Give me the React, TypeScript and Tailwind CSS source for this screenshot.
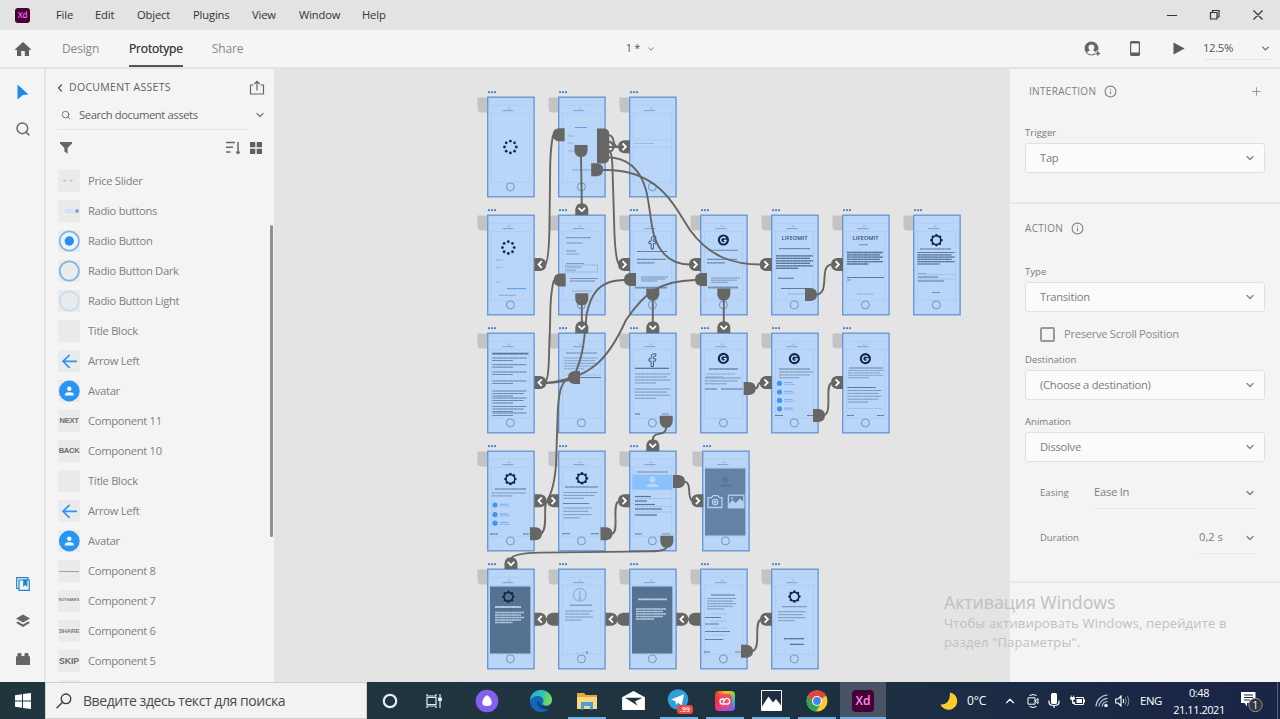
import React from "react";
import { ChevronDown, ChevronLeft, ChevronUp, Info, Plus, Search } from "lucide-react";

type P = { children?: React.ReactNode };
const INK = "#34506f";

/* ---------- artboard content primitives (local artboard units) ---------- */

function L({ x, y, w, o = 0.6, h = 1, c = INK }: { x: number; y: number; w: number; o?: number; h?: number; c?: string }) {
  return (
    <g stroke={c} strokeWidth={h}>
      <path d={`M${x} ${y}h${w}`} strokeOpacity={o * 0.55} />
      <path d={`M${x} ${y}h${w}`} strokeOpacity={o * 0.5} strokeDasharray="3.1 .6 1.7 .5 4.3 .5" />
    </g>
  );
}
function Para({ x, y, w, n, o = 0.55, gap = 2.9, c = INK, h = 0.9 }: { x: number; y: number; w: number; n: number; o?: number; gap?: number; c?: string; h?: number }) {
  return (
    <g>
      {Array.from({ length: n }, (_, i) => (
        <L key={i} x={x} y={y + i * gap} w={i === n - 1 ? w * 0.6 : w - (i % 2) * 3} o={o} c={c} h={h} />
      ))}
    </g>
  );
}
function Dots({ x, y }: { x: number; y: number }) {
  return (
    <g fill="#10294d">
      {Array.from({ length: 8 }, (_, i) => (
        <circle key={i} cx={x + 5.9 * Math.cos((i * Math.PI) / 4)} cy={y + 5.9 * Math.sin((i * Math.PI) / 4)} r={1.4} />
      ))}
    </g>
  );
}
function Gear({ x, y }: { x: number; y: number }) {
  return (
    <g fill="#10294d">
      <circle cx={x} cy={y} r={4.4} fill="none" stroke="#10294d" strokeWidth={1.5} />
      {Array.from({ length: 8 }, (_, i) => (
        <circle key={i} cx={x + 4.9 * Math.cos((i * Math.PI) / 4)} cy={y + 4.9 * Math.sin((i * Math.PI) / 4)} r={1.35} />
      ))}
    </g>
  );
}
function GLogo({ x, y }: { x: number; y: number }) {
  return (
    <g>
      <circle cx={x} cy={y} r={5.6} fill="#10294d" />
      <path d={`M${x + 2.2} ${y - 1.7}a2.8 2.8 0 1 0 .6 2h-2.6`} fill="none" stroke="#cfe2fb" strokeWidth={1.3} />
    </g>
  );
}
function FLogo({ x, y }: { x: number; y: number }) {
  return (
    <path
      d={`M${x + 3.4} ${y - 6.2}h-1.9q-2.8 0-2.8 3.2v1.8h-2.2v2.3h2.2v5.4h2.3v-5.4h2.1l.3-2.3h-2.4v-1.6q0-1 1-1h1.4z`}
      fill="none"
      stroke={INK}
      strokeWidth={0.9}
    />
  );
}
function Checks({ x, ys }: { x: number; ys: number[] }) {
  return (
    <g>
      {ys.map((y) => (
        <g key={y}>
          <circle cx={x} cy={y} r={2.6} fill="#3d97f3" />
          <L x={x + 5} y={y - 0.7} w={8} c="#4a95ea" o={0.8} />
          <L x={x + 5} y={y + 1.2} w={10} c="#4a95ea" o={0.45} />
        </g>
      ))}
    </g>
  );
}
function Title({ x, y, children }: { x: number; y: number } & P) {
  return (
    <text x={x} y={y} fontSize={5.8} fontWeight={600} textAnchor="middle" fill={INK} fontFamily="Open Sans, sans-serif" textLength={26} lengthAdjust="spacingAndGlyphs">
      {children}
    </text>
  );
}
function Dark({ c = "#567291" }: { c?: string }) {
  return <rect x={3} y={17.5} width={40.4} height={67} fill={c} />;
}

type Board = { x: number; y: number; body: React.ReactNode };

const C = [487.5, 558.5, 629.5, 700.5, 771.3, 842.2, 913.3];
const R = [96.6, 214.6, 332.7, 450.7, 568.8];

const boards: Board[] = [
  { x: C[0], y: R[0], body: <Dots x={23.4} y={50} /> },
  {
    x: C[1], y: R[0],
    body: (
      <g>
        <L x={17} y={30.5} w={12} c="#3f86dd" o={0.9} />
        <L x={10} y={39} w={6} o={0.25} /><L x={10} y={46} w={6} o={0.25} /><L x={10} y={54} w={6} o={0.25} />
        <L x={14} y={73} w={22} c="#3f86dd" />
      </g>
    ),
  },
  { x: C[2], y: R[0], body: <g><L x={5} y={46.5} w={20} c="#6ea6e8" o={0.6} /><path d="M4 43h38M4 50h38" stroke="#9dc3f0" strokeWidth={0.5} /></g> },
  {
    x: C[0], y: R[1],
    body: (
      <g>
        <Dots x={21.3} y={32.6} />
        <L x={9} y={45} w={7} o={0.25} /><L x={9} y={52.5} w={7} o={0.25} /><L x={9} y={67} w={5} o={0.25} />
        <L x={20} y={73.6} w={19} c="#3584e4" o={0.9} /><L x={12} y={80.3} w={17} o={0.35} />
      </g>
    ),
  },
  {
    x: C[1], y: R[1],
    body: (
      <g>
        <L x={8} y={22.7} w={25} o={0.6} /><L x={8} y={28} w={17} o={0.5} /><L x={8} y={36} w={10} o={0.5} /><L x={8} y={39} w={13} o={0.4} />
        <L x={8} y={48.5} w={18} o={0.5} /><rect x={7.5} y={50} width={32} height={7} fill="none" stroke="#7e9fca" strokeWidth={0.5} />
        <L x={8.5} y={52} w={15} o={0.5} /><L x={8.5} y={55} w={9} o={0.5} /><L x={12} y={63.5} w={28} /><L x={12} y={66} w={25} /><L x={14} y={76} w={20} o={0.3} />
      </g>
    ),
  },
  { x: C[2], y: R[1], body: <g><FLogo x={23.4} y={27.5} /><L x={8} y={36.5} w={30} o={0.8} /><Para x={8} y={44.3} w={29} n={2} gap={3.6} o={0.9} /><Para x={12} y={62} w={27} n={3} gap={2} o={0.6} /><L x={6} y={72.6} w={32} h={1.7} /></g> },
  { x: C[3], y: R[1], body: <g><GLogo x={23.4} y={25} /><L x={10} y={35.3} w={28} o={0.7} /><Para x={7} y={44.3} w={30} n={2} gap={3.6} o={0.9} /><Para x={11} y={63} w={29} n={3} gap={2.2} /><L x={8} y={72.5} w={30} h={1.8} /></g> },
  { x: C[4], y: R[1], body: <g><Title x={23.5} y={25.4}>LIFEOMIT</Title><L x={8} y={33.6} w={31} o={0.75} /><Para x={5} y={40.8} w={37} n={6} gap={2.5} o={0.95} h={1.3} /><L x={7} y={63.3} w={16} o={0.9} /><L x={10} y={73.5} w={25} o={0.85} /><L x={17} y={79} w={17} o={0.25} /></g> },
  { x: C[5], y: R[1], body: <g><Title x={23.5} y={25.4}>LIFEOMIT</Title><L x={17} y={29.7} w={9} /><Para x={5} y={37.5} w={36} n={6} gap={2.3} o={0.95} h={1.3} /><L x={5} y={62.5} w={37} o={0.9} /><L x={5} y={65} w={4} /><L x={15} y={79} w={17} o={0.25} /></g> },
  { x: C[6], y: R[1], body: <g><Gear x={23.4} y={25.2} /><L x={7} y={34} w={31} o={0.8} /><Para x={4.5} y={37.5} w={37} n={6} gap={2.3} o={0.9} h={1.2} /><L x={5} y={58.5} w={8} o={0.35} /><L x={5} y={62} w={20} o={0.8} /><L x={5} y={66} w={26} o={0.8} /><path d="M4.500 59.500h38M4.500 64h38" stroke="#86aede" strokeWidth={0.5} /><L x={19} y={77.5} w={8} /></g> },
  {
    x: C[0], y: R[2],
    body: (
      <g>
        <L x={5.5} y={20.6} w={36} o={0.9} h={1.9} />
        {[25, 31.7, 39, 48, 58, 65, 73.5, 80].map((y, i) => <Para key={y} x={5.5} y={y} w={34} n={i > 3 && i < 7 ? 3 : 2} gap={2.5} o={0.7} h={1} />)}
      </g>
    ),
  },
  { x: C[1], y: R[2], body: <g><L x={8} y={20} w={31} /><Para x={6} y={25} w={34} n={5} gap={2.7} o={0.45} /><L x={21} y={44.5} w={22} o={0.9} /><path d="M6 42h37" stroke="#86aede" strokeWidth={0.5} /></g> },
  { x: C[2], y: R[2], body: <g><FLogo x={23.4} y={27} /><L x={6} y={35.3} w={34} o={0.9} h={1.2} /><Para x={6} y={41} w={35} n={4} gap={3} /><Para x={6} y={56} w={35} n={4} gap={3.1} /><L x={6} y={81} w={5} o={0.9} /><L x={33} y={81} w={7} /></g> },
  { x: C[3], y: R[2], body: <g><GLogo x={23.4} y={25.4} /><L x={9} y={36} w={29} o={0.9} h={1.2} /><Para x={6} y={41} w={29} n={2} o={0.4} /><Para x={5} y={45} w={36} n={3} /><L x={5} y={56} w={12} o={0.8} /><L x={21} y={56} w={22} o={0.8} /></g> },
  { x: C[4], y: R[2], body: <g><GLogo x={23.4} y={25.6} /><L x={8} y={36} w={31} o={0.7} /><Para x={8} y={39} w={34} n={3} /><Checks x={8.5} ys={[50.3, 59, 67.4, 75.8]} /><L x={4} y={82.5} w={8} o={0.8} /><L x={36} y={82.5} w={6} o={0.8} /></g> },
  { x: C[5], y: R[2], body: <g><GLogo x={23.4} y={25.6} /><L x={7} y={35} w={34} o={0.7} /><Para x={6} y={37.5} w={35} n={4} gap={2.4} o={0.45} /><L x={5.5} y={54.5} w={28} o={0.9} /><Para x={5.5} y={57.5} w={34} n={5} /><path d="M6 75.5h34" stroke="#86aede" strokeWidth={0.5} /><L x={5} y={82.5} w={7} o={0.8} /><L x={35} y={82.5} w={7} o={0.8} /></g> },
  { x: C[0], y: R[3], body: <g><Gear x={23.4} y={28} /><L x={8} y={38} w={31} o={0.8} /><Para x={5} y={42} w={34} n={2} /><Checks x={8} ys={[54, 63.6, 72.2]} /><L x={3} y={83} w={8} o={0.8} /><L x={36} y={83} w={6} o={0.8} /></g> },
  { x: C[1], y: R[3], body: <g><Gear x={24} y={27.3} /><L x={7} y={36} w={33} o={0.8} /><Para x={5.5} y={41.5} w={34} n={3} /><L x={5} y={52.5} w={26} o={0.8} /><Para x={5.5} y={57} w={28} n={4} gap={3.3} /><L x={4} y={82.7} w={8} o={0.8} /><L x={33} y={82.7} w={8} o={0.8} /></g> },
  {
    x: C[2], y: R[3],
    body: (
      <g>
        <L x={8} y={21} w={31} o={0.6} />
        <rect x={3.2} y={23.5} width={40.5} height={15.3} fill="#8bc1fa" />
        <g fill="#b7d7fb"><circle cx={23.4} cy={28.5} r={3} /><path d="M17.5 36v-1q0-2.3 6-2.3t6 2.3v1z" /></g>
        {[45.5, 50, 53.5, 58, 64].map((y, i) => <L key={y} x={6} y={y} w={[16, 12, 20, 27, 22][i]} o={0.95} h={1.2} />)}
        <path d="M6 47.5h36M6 55.5h36M6 61h36" stroke="#86aede" strokeWidth={0.5} />
        <L x={6} y={83} w={7} o={0.8} /><L x={33} y={83} w={8} />
      </g>
    ),
  },
  {
    x: 702.5, y: R[3],
    body: (
      <g>
        <Dark c="#6582a5" />
        <g fill="#5a779b"><circle cx={23.4} cy={28.5} r={3} /><path d="M17.5 36v-1q0-2.3 6-2.3t6 2.3v1z" /></g>
        <g fill="none" stroke="#b4d1f3" strokeWidth={1.3}>
          <path d="M6 46.7h3.6l1.5-2h4.8l1.5 2H20v9.8H6z" /><circle cx={13.2} cy={51} r={2.7} /><circle cx={13.2} cy={51} r={0.6} />
          <rect x={26.4} y={44.2} width={15.4} height={12.6} />
        </g>
        <path d="M26.4 57v-3.500l4.2-4.5 3 3 4.500-4.500 3.700 4V57z" fill="#b4d1f3" /><circle cx={30} cy={47.3} r={1} fill="#b4d1f3" />
      </g>
    ),
  },
  { x: C[0], y: R[4], body: <g><Dark /><g transform="translate(-2 0)"><Gear x={23.4} y={27.8} /></g><L x={8} y={38} w={26} c="#cfe2fa" o={1} h={2} /><Para x={8} y={43.5} w={29} n={5} gap={2.5} c="#cfe2fa" o={0.95} h={1.4} /></g> },
  { x: C[1], y: R[4], body: <g><circle cx={21.8} cy={25.8} r={6.3} fill="none" stroke="#7da3d3" /><path d="M21.8 21.5v8M20 30h3.5" stroke="#7da3d3" /><L x={12} y={36.2} w={22} o={0.7} /><Para x={7} y={42} w={28} n={4} gap={3} /><path d="M18 84h2M24 84h1.5" stroke="#9ab9e2" /><circle cx={29} cy={83.5} r={1.2} fill="#5b99e8" /></g> },
  { x: C[2], y: R[4], body: <g><Dark /><L x={9} y={30.3} w={29} c="#cfe2fa" o={1} h={1.7} /><Para x={7} y={40} w={30} n={5} gap={2.5} c="#cfe2fa" o={0.95} h={1.4} /></g> },
  { x: C[3], y: R[4], body: <g><L x={11} y={26} w={24} o={0.8} /><Para x={7} y={29.5} w={29} n={5} gap={2.6} /><L x={5} y={48.5} w={16} o={0.85} /><L x={5} y={55} w={14} o={0.75} /><L x={5} y={62.5} w={25} o={0.85} /><L x={5} y={70.5} w={18} o={0.8} /><path d="M11 45h16M11 52h16M11 59h16M11 66h16" stroke="#8badd8" strokeWidth={0.5} /><L x={4} y={83} w={6} o={0.8} /><L x={35} y={83} w={6} /></g> },
  { x: C[4], y: R[4], body: <g><Gear x={23.4} y={27.6} /><L x={11} y={37.7} w={25} o={0.6} /><Para x={7} y={42.7} w={28} n={4} gap={3} /><L x={13} y={69.7} w={20} o={0.95} h={1.2} /><L x={19} y={75.4} w={14} o={0.95} h={1.2} /></g> },
];

function Artboard({ x, y, body }: Board) {
  return (
    <div className="absolute" style={{ left: x - 284.4, top: y - 77 }}>
      <svg width={60} height={110} viewBox="-10 -8 60 110" className="block overflow-visible">
        <path d="M-9.5 0.4h10v15h-6q-4 0-4-4z" fill="#c3c3c3" />
        <g fill="#4a81cf"><circle cx={2} cy={-4.8} r={1.1} /><circle cx={5} cy={-4.8} r={1.1} /><circle cx={8} cy={-4.8} r={1.1} /></g>
        <rect x={0.7} y={0.2} width={46.4} height={99.6} fill="#b9d6f9" stroke="#6998d8" strokeWidth={1.4} />
        <path d="M1 8.3h46M1 16.3h46M1 85.3h46M4.5 17v68M42.5 17v68" stroke="#a7c8f0" strokeWidth={0.6} />
        <path d="M20.5 11.2h3" stroke="#89a7cf" strokeWidth={0.8} />
        <L x={15.5} y={13.6} w={11} o={0.45} />
        <circle cx={23.4} cy={89.9} r={4} fill="none" stroke="#7394be" strokeWidth={1} />
        {body}
      </svg>
    </div>
  );
}

/* ---------- prototype wires ---------- */

const rot: Record<string, number> = { R: 0, D: 90, L: 180, U: 270 };
const sources: [number, number, string][] = [
  [558.6, 134.8, "L"], [581, 151, "D"], [597.2, 169.8, "R"], [559.7, 280, "L"], [630, 279.6, "L"], [701, 279.6, "L"],
  [581.8, 299.3, "D"], [652.8, 294.5, "D"], [723.8, 294.5, "D"], [811, 294.6, "R"], [574, 377.6, "L"], [749.7, 388.6, "R"],
  [819, 415.4, "R"], [666.2, 421.7, "D"], [536, 533.8, "R"], [606.5, 533.8, "R"], [666.8, 541.7, "D"], [679, 481.6, "R"],
  [552.6, 619.3, "L"], [623, 619.3, "L"], [694.6, 619.3, "L"], [747, 651.3, "R"],
];
// [x, y, rounded side, chevron direction]
const targets: [number, number, string, string][] = [
  [624, 146.8, "L", "R"], [581.8, 209.2, "U", "D"], [540.4, 264.5, "R", "L"], [624, 264.5, "L", "R"], [695, 264.5, "L", "R"],
  [765.8, 264.5, "L", "R"], [837, 264.5, "L", "R"], [581.8, 327.2, "U", "D"], [652.8, 327.2, "U", "D"], [723.8, 327.2, "U", "D"],
  [540.4, 382.6, "R", "L"], [765.8, 382.6, "L", "R"], [837, 382.6, "L", "R"], [652.8, 445.2, "U", "D"], [540.4, 500.8, "R", "L"],
  [553, 500.8, "L", "R"], [624, 500.8, "L", "R"], [697.3, 500.8, "L", "R"], [511, 563.3, "U", "D"], [540.4, 619.3, "R", "L"],
  [611.5, 619.3, "R", "L"], [682.3, 619.3, "R", "L"], [766, 619.3, "L", "R"],
];
const wires = [
  "M553 135Q550.6 148 550.2 165L549.5 225Q549 262 545 264.5",
  "M581 156L581.8 204",
  "M608 135Q612.5 135 613.5 141T619 147M608 141.5Q613 142 613.5 147M608 147h12M608 152Q613 152 613.5 147",
  "M608 150Q612 151 612.4 165L614.2 225Q615 259 619 264.5",
  "M608 157.3C630 158 641 172 646 190C652 215 650 235 661 250C668 260 678 264.5 690 264.5",
  "M602 170C660 168 675 208 690 230C710 258 735 264.5 761 264.5",
  "M554 280Q550.3 292 550.2 320L549 355Q548.6 380 545 382.6",
  "M625 280C596 280 590 298 586.5 315C584.5 340 583 357 574 376",
  "M695 280C660 281 645 292 626 320C608 360 590 379 545 383",
  "M570 377C560 382 558 395 557.5 420L556 465Q554 490 547 500.8",
  "M569 380C560 382 553 383 545 383",
  "M541 534C549 528 542 504 547.5 500.8",
  "M581.8 304v18M652.8 300v22M723.8 300v22",
  "M816 294.6C831 294 818 265 832 264.5",
  "M755 388.6C760 388 756 383 761 382.6",
  "M824 415.4C833 412 824 385 832 382.6",
  "M666.2 427C666 438 653 430 652.8 440",
  "M612 533.8C620 532 611 504 619 500.8",
  "M684 481.6C693 482 686 498 692.5 500.8",
  "M666.8 547Q666 551 650 551.4L540 552.6Q513 553 511 559",
  "M752 651.3C762 649 753 622 761 619.3",
  "M546 619.300h12M617 619.300h12M688 619.300h12",
];

function Wires() {
  return (
    <svg width={736} height={613} viewBox="274 69 736 613" className="absolute left-0 top-0">
      <g fill="none" stroke="#666664" strokeWidth={1.9}>{wires.map((d) => <path key={d} d={d} />)}</g>
      <path d="M597 128.5h6.5q5.7 0 5.7 5.5v24q0 5.4-5.7 5.4H597z" fill="#666664" />
      {sources.map(([x, y, r], i) => (
        <path key={i} transform={`translate(${x} ${y}) rotate(${rot[r]})`} d="M-6-6.5h6q6 .8 6 6.5t-6 6.5h-6z" fill="#666664" />
      ))}
      {targets.map(([x, y, r, c], i) => (
        <g key={i} transform={`translate(${x} ${y})`}>
          <path transform={`rotate(${rot[r]})`} d="M-6-6.5h6q6 .8 6 6.5t-6 6.5h-6z" fill="#666664" />
          <path transform={`rotate(${rot[c]})`} d="M-1.4-3.3L1.9 0-1.4 3.3" fill="none" stroke="#fff" strokeWidth={1.8} />
        </g>
      ))}
    </svg>
  );
}

/* ---------- left panel ---------- */

const ArrowThumb = () => (
  <svg viewBox="0 0 22 22" className="size-[22px]" fill="none" stroke="#2f94f3" strokeWidth="1.7"><path d="M19 11.3H5M11.7 4.8L5 11.3l6.7 6.5" /></svg>
);
const AvatarThumb = () => (
  <svg viewBox="0 0 22 22" className="size-[22px]"><circle cx="11.3" cy="11" r="10.4" fill="#2695f3" /><circle cx="11.3" cy="8.8" r="2.2" fill="#fff" /><path d="M6.9 15.4v-1q0-2.2 4.4-2.2t4.4 2.2v1z" fill="#fff" /></svg>
);
const Ring = ({ c, dot }: { c: string; dot?: boolean }) => (
  <svg viewBox="0 0 22 22" className="size-[22px]"><circle cx="11.3" cy="11" r="9.6" fill={dot ? "#eef4fb" : "none"} stroke={c} strokeWidth="1.8" />{dot && <circle cx="11.3" cy="11" r="4.7" fill="#2490f2" />}</svg>
);
const Word = ({ children }: P) => <span className="font-['Liberation_Sans'] text-[7.600px] font-bold text-[#6d6d6d] tracking-[-0.300px]">{children}</span>;

const assets: [string, React.ReactNode][] = [
  ["Price Slider", <svg key="a" viewBox="0 0 22 22" className="size-[22px]" fill="#a5bfdc"><path d="M4 10.8h5M11.500 10.800h5" stroke="#cddceb" /><circle cx="6.500" cy="10.800" r="1" /><circle cx="13" cy="10.800" r="1" /></svg>],
  ["Radio buttons", <svg key="b" viewBox="0 0 22 22" className="size-[22px]"><path d="M7 11h8" stroke="#cfe0f4" strokeWidth="4" /><circle cx="19" cy="11" r="2" fill="#79a9df" /></svg>],
  ["Radio Button", <Ring key="c" c="#7fb2ea" dot />],
  ["Radio Button Dark", <Ring key="d" c="#7fb2ea" />],
  ["Radio Button Light", <Ring key="e" c="#c7ddf3" />],
  ["Title Block", null],
  ["Arrow Left", <ArrowThumb key="g" />],
  ["Avatar", <AvatarThumb key="h" />],
  ["Component 11", <Word key="i">NEXT</Word>],
  ["Component 10", <Word key="j">BACK</Word>],
  ["Title Block", null],
  ["Arrow Left", <ArrowThumb key="l" />],
  ["Avatar", <AvatarThumb key="m" />],
  ["Component 8", <div key="n" className="h-px w-5 bg-[#a0a0a0]" />],
  ["Component 7", <span key="o" className="font-['Liberation_Sans'] text-[3.600px] font-bold text-[#777]">NOTHANKS</span>],
  ["Component 6", <span key="p" className="font-['Liberation_Sans'] text-[6.200px] font-bold text-[#808080] tracking-[-0.200px]">SHARE</span>],
  ["Component 5", <span key="q" className="font-['Liberation_Sans'] text-[8.600px] font-bold text-[#6d6d6d]">SKIP</span>],
];

function AssetsPanel() {
  return (
    <div className="relative flex w-[228px] shrink-0 flex-col overflow-hidden bg-[#f4f4f4]">
      <div className="flex h-[38px] shrink-0 items-center pl-2 pr-[9px]">
        <ChevronLeft size={12} strokeWidth={2.600} color="#555" />
        <span className="ml-[3px] text-[10.500px] tracking-[0.300px] text-[#5f5f5f]">DOCUMENT ASSETS</span>
        <svg viewBox="0 0 16 16" className="ml-auto size-4" fill="none" stroke="#666" strokeWidth="1.200"><path d="M4.500 5H1.500v9h13V5h-3M8 10.500V1.500M5.300 4L8 1.300 10.700 4" /></svg>
      </div>
      <div className="ml-[11px] flex h-[22px] w-[208px] shrink-0 items-start">
        <Search size={10} strokeWidth={2.400} color="#777" className="ml-1 mt-[3px]" />
        <span className="ml-[8px] text-[11.200px] leading-[16px] tracking-[-0.380px] text-[#5f5f5f]">Search document assets</span>
        <ChevronDown size={12} strokeWidth={2.600} color="#777" className="ml-auto mr-[-1px] mt-[2px]" />
      </div>
      <div className="ml-[11px] h-px w-[191px] shrink-0 bg-[#e4e4e4]" />
      <div className="flex h-[36px] shrink-0 items-center pl-[14px] pr-[12px]">
        <svg viewBox="0 0 12 12" className="size-3" fill="#666"><path d="M0 0h12v1.500L7.600 6v5.800L4.400 9.500V6L0 1.500z" /></svg>
        <svg viewBox="0 0 14 14" className="ml-auto h-[14px] w-[14px]" fill="none" stroke="#666" strokeWidth="1.500"><path d="M0 1.500h9M0 6.300h7M0 11h4.500M12 1v11.500M10.300 10.700L12 12.500l1.700-1.800" /></svg>
        <svg viewBox="0 0 12 12" className="ml-[10px] size-3" fill="#5f5f5f"><path d="M0 0h5.300v5.300H0zM6.700 0H12v5.300H6.700zM0 6.700h5.300V12H0zM6.700 6.700H12V12H6.700z" /></svg>
      </div>
      <div className="flex shrink-0 flex-col pl-3">
        {assets.map(([name, thumb], i) => (
          <div key={i} className="flex h-[30px] items-center">
            <div className="flex size-[22px] items-center justify-center overflow-hidden bg-[#ebebeb]">{thumb}</div>
            <span className="ml-2 text-[11.200px] tracking-[-0.300px] text-[#808080]">{name}</span>
          </div>
        ))}
        <div className="mt-1 h-[22px] w-[22px] bg-[#ebebeb]" />
      </div>
      <div className="absolute right-[1px] top-[156px] h-[312px] w-[3px] rounded-full bg-[#909090]" />
    </div>
  );
}

function Rail() {
  return (
    <div className="flex w-[46px] shrink-0 flex-col items-center border-r-2 border-[#e6e6e6] bg-[#f4f4f4] pb-[17px] pl-[1px] pt-[15px]">
      <svg viewBox="0 0 12 16" className="h-4 w-3" fill="#1c8ce8"><path d="M0.500 0.500L11.500 10.500 6 11 0.500 15.500z" /></svg>
      <Search size={16} strokeWidth={2.200} color="#666" className="mt-[21px]" />
      <svg viewBox="0 0 14 14" className="mt-auto size-[14px]" fill="none" stroke="#1b86cf" strokeWidth="1.200"><path d="M3 3h10.300v10.300H3zM3 11.500H.7V.7H12V3" /><path d="M7.800 3h3v5.500L9.300 7 7.800 8.500z" fill="#1b86cf" /></svg>
      <svg viewBox="0 0 14 14" className="mt-[23px] size-[14px]" fill="#666"><path d="M7 .5L14 4.500 7 8.500 0 4.500zM0 8.800l2-1.200 5 2.900 5-2.900 2 1.200-7 4.200z" /></svg>
      <svg viewBox="0 0 14 12" className="mt-[25px] h-3 w-[14px]" fill="#666"><path d="M1.500 3V1q0-1 1-1h2q1 0 1 1v2h3V1q0-1 1-1h2q1 0 1 1v2q1.500 0 1.500 1.200V12H0V4.200Q0 3 1.500 3z" /></svg>
    </div>
  );
}

/* ---------- right panel ---------- */

const Label = ({ children }: P) => <div className="flex h-[20px] items-center text-[9.600px] tracking-[-0.020px] text-[#7a7a7a]">{children}</div>;
const Select = ({ children }: P) => (
  <div className="flex h-[30px] w-[240px] items-center justify-between rounded-[3px] border border-[#e0e0e0] bg-[#fbfbfb] pl-[14px] pr-[8px] text-[11.200px] tracking-[-0.260px] text-[#7d7d7d]">
    <span>{children}</span>
    <ChevronDown size={12} strokeWidth={2.600} color="#858585" />
  </div>
);
const Heading = ({ children }: P) => (
  <div className="flex items-center gap-[8px] text-[10px] tracking-[0.320px] text-[#808080]">{children}<Info size={13} strokeWidth={2} color="#808080" /></div>
);

function Inspector() {
  return (
    <div className="flex w-[270px] shrink-0 flex-col bg-[#f4f4f4]">
      <div className="flex h-[45px] items-center justify-between pl-[19px] pr-[17px]"><Heading>INTERACTION</Heading><Plus size={13} strokeWidth={1.800} color="#999" /></div>
      <div className="mt-[9px] pl-[15px]"><Label>Trigger</Label><Select>Tap</Select></div>
      <div className="mt-[29px] h-[2px] bg-[#e8e8e8]" />
      <div className="flex h-[49px] items-center pl-[15px]"><Heading>ACTION</Heading></div>
      <div className="mt-[9px] pl-[15px]">
        <Label>Type</Label>
        <Select>Transition</Select>
        <div className="flex h-[38px] items-center pl-[15px] pt-[7px]">
          <div className="size-[15px] rounded-[2px] border-2 border-[#999]" />
          <span className="ml-[9px] text-[11.200px] tracking-[-0.300px] text-[#8a8a8a]">Preserve Scroll Position</span>
        </div>
        <Label>Destination</Label>
        <Select>(Choose a destination)</Select>
        <div className="h-[12px]" />
        <Label>Animation</Label>
        <Select>Dissolve</Select>
      </div>
      <div className="ml-[30px] mt-[15px] flex h-[32px] w-[216px] items-center text-[#7d7d7d]">
        <span className="w-[54px] text-[9.600px]">Easing</span>
        <div className="flex h-full grow items-center justify-between border-b border-[#e9e9e9] text-[11.200px] tracking-[-0.260px]">Ease In<ChevronDown size={12} strokeWidth={2.600} /></div>
      </div>
      <div className="ml-[30px] mt-[13px] flex h-[32px] w-[216px] items-center justify-between text-[#7d7d7d]">
        <span className="text-[9.600px] tracking-[-0.100px]">Duration</span>
        <div className="flex h-full w-[57px] items-center justify-between border-b border-[#e9e9e9] text-[11.200px]">0,2 s<ChevronDown size={12} strokeWidth={2.600} /></div>
      </div>
      <div className="mt-[27px] h-[2px] bg-[#e8e8e8]" />
    </div>
  );
}

/* ---------- top bars ---------- */

function TopBars() {
  return (
    <>
      <div className="flex h-[30px] shrink-0 items-center bg-[#e3e3e3] pl-[15px] text-[11.200px] tracking-[-0.150px] text-[#333]">
        <div className="mr-[26px] flex size-[15px] items-center justify-center rounded-[3px] bg-[#470137] text-[8px] font-semibold text-[#f76be6]">Xd</div>
        <span className="w-[39px]">File</span><span className="w-[42px]">Edit</span><span className="w-[56px]">Object</span><span className="w-[59px]">Plugins</span><span className="w-[47px]">View</span><span className="w-[63px]">Window</span><span>Help</span>
        <svg viewBox="0 0 100 14" className="ml-auto mr-[14px] h-[14px] w-[100px]" fill="none" stroke="#333" strokeWidth="1.200"><path d="M1 7.500h10M44.500 4.500h6.500v6.500h-6.500zM46.500 4.300V2.500h6.500v6.500h-1.700M87.500 2.500l9 9M96.500 2.500l-9 9" /></svg>
      </div>
      <div className="flex h-[39px] shrink-0 items-center border-b-2 border-[#e3e3e3] bg-[#f5f5f5] pl-[15px] text-[12px] text-[#8a8a8a]">
        <svg viewBox="0 0 16 14" className="h-[14px] w-4" fill="#5f5f5f"><path d="M8 0l8 7.300-1 1.100-1-.9V14H9.800V9H6.200v5H2V7.500l-1 .9-1-1.100z" /></svg>
        <span className="ml-[31px] w-[67px] tracking-[-0.150px]">Design</span>
        <div className="relative mr-[29px] flex h-[39px] items-center tracking-[-0.150px] text-[#444] [text-shadow:0_0_0.400px_#444]">Prototype<div className="absolute inset-x-0 bottom-[1px] h-[2px] bg-[#555]" /></div>
        <span className="tracking-[-0.150px]">Share</span>
        <div className="ml-auto flex items-center">
          <div className="mr-[428px] flex items-center gap-[6px] text-[11px] tracking-[-0.300px] text-[#555]"><span>1 *</span><ChevronDown size={10} strokeWidth={2.500} color="#999" /></div>
          <svg viewBox="0 0 17 16" className="h-4 w-[17px]" fill="none" stroke="#666" strokeWidth="1.300"><circle cx="7.500" cy="7.500" r="6.300" /><path d="M3 12c0-1.500 3-1.500 3-3-2-2-1.500-5.500 1.500-5.500S11 7 9 9c0 1.500 2 1.300 3 2.500l-4.500 2.300z" fill="#f5f5f5" stroke="none" /><path d="M2 3.500Q4 1 7.500 1.200T13.500 6q.5 3-1.500 5.300-1-1-3-1.800c2-2 2-6-1.500-6S3.500 7.500 6 9.500q-2 .5-3 2Q-.5 8 2 3.500z" fill="#666" stroke="none" /><path d="M14 9.500v6M11 12.500h6" stroke="#f5f5f5" strokeWidth="3" /><path d="M13.800 10.300v4.400M11.600 12.500H16" /></svg>
          <svg viewBox="0 0 10 15" className="ml-[29px] h-[15px] w-[10px]"><rect x=".6" y=".6" width="8.800" height="13.800" rx="1" fill="none" stroke="#5f5f5f" strokeWidth="1.200" /><path d="M0 1h10v1.500H0zM0 11.500h10V14H0z" fill="#5f5f5f" /></svg>
          <svg viewBox="0 0 12 13" className="ml-[33px] h-[13px] w-3" fill="#5a5a5a"><path d="M.5.5L11.700 6.500.5 12.500z" /></svg>
          <div className="ml-[18px] mr-[9px] flex h-[22px] w-[68px] items-center justify-between border-b border-[#e7e7e7] text-[11.400px] text-[#555]"><span className="tracking-[-0.400px]">12.5%</span><ChevronDown size={11} strokeWidth={2.600} color="#666" /></div>
        </div>
      </div>
    </>
  );
}

/* ---------- taskbar ---------- */

const Slot = ({ children, on, active }: P & { on?: boolean; active?: boolean }) => (
  <div className={active ? "relative flex h-full w-[46px] items-center justify-center bg-[#485465]" : "relative flex h-full w-[46px] items-center justify-center"}>
    {children}
    {on && <div className={active ? "absolute inset-x-0 bottom-0 h-[2px] bg-[#76b0e3]" : "absolute inset-x-[4px] bottom-0 h-[2px] bg-[#76b0e3]"} />}
  </div>
);

function Taskbar() {
  return (
    <div className="flex h-[37px] shrink-0 items-stretch bg-linear-to-r from-[#20363f] via-[#1f3440] to-[#1a2446] text-white">
      <div className="flex w-[45px] items-center justify-center">
        <svg viewBox="0 0 16 16" className="size-4" fill="#fff"><path d="M0 2.200l7-1v6.400H0zM8 1l8-1v7.600H8zM0 8.500h7v6.300l-7-1zM8 8.500h8V16l-8-1.100z" /></svg>
      </div>
      <div className="flex w-[322px] items-center border border-[#cfcfcf] bg-[#f2f2f2] pl-[10px]">
        <svg viewBox="0 0 16 16" className="size-4" fill="none" stroke="#3a3a3a" strokeWidth="1.300"><circle cx="10" cy="5.800" r="4.800" /><path d="M6.500 9.300L.6 15.200" /></svg>
        <span className="ml-[11px] text-[14px] tracking-[-0.430px] text-[#4a4a4a]">Введите здесь текст для поиска</span>
      </div>
      <div className="flex items-stretch">
        <Slot><svg viewBox="0 0 16 16" className="size-4"><circle cx="8" cy="8" r="6.200" fill="none" stroke="#e4ecef" strokeWidth="2.200" /></svg></Slot>
        <div className="flex w-[42px] items-center justify-center"><svg viewBox="0 0 16 16" className="size-4" fill="none" stroke="#e4ecef" strokeWidth="1.200"><path d="M1 4.500h9v7H1zM1 1v2h9V1M1 15v-2h9v2M14 1v3.500M14 8v7" /><path d="M12.700 5h2.600v2.500h-2.600z" fill="#fff" /></svg></div>
        <div className="w-[9px]" />
        <Slot><svg viewBox="0 0 24 24" className="size-6"><circle cx="12" cy="12" r="11.300" fill="#8560ef" /><path d="M12 6.500q2.500 0 4.500 5.500 1.500 5-4.500 5t-4.500-5q2-5.500 4.500-5.500z" fill="#fff" /></svg></Slot>
        <div className="w-[8px]" />
        <Slot>
          <svg viewBox="0 0 24 24" className="size-6"><defs><linearGradient id="eg" x1="0" y1="0" x2="1" y2="0.300"><stop offset="0" stopColor="#2aa7e8" /><stop offset=".55" stopColor="#2fc2b7" /><stop offset="1" stopColor="#74d957" /></linearGradient></defs><circle cx="12" cy="12" r="11" fill="#1565b8" /><path d="M1 12C1 5 6 1 12 1s11 4.500 11 9.500c0 4-3 6-6 6s-3.500-1-3.500-1.700 1-1.500 1-3C14.500 9 12 7 8.500 7S2 9 1 12z" fill="url(#eg)" /><path d="M13.600 15c0 2 3 2.800 5.500 2 2-.5 3-1.500 3.900-3.500l1 10h-5l3.500-5q-2 1.500-4.500 1.500c-3.500 0-5-2-4.400-5z" fill="#20343f" /><path d="M8 12c0 5 3.500 8.500 8 8.500 2 0 3.500-.6 5-1.700-4 .8-10.500-.8-10.500-5.800z" fill="#0b3f86" /></svg>
        </Slot>
        <Slot on><svg viewBox="0 0 22 18" className="h-[18px] w-[22px]"><path d="M1 1h7l2 2h11v14H1z" fill="#e4a93b" /><path d="M1 5h20v12H1z" fill="#fbd879" /><path d="M5 10h12v7.500h-3V14H8v3.500H5z" fill="#4aa0d8" /></svg></Slot>
        <Slot><svg viewBox="0 0 24 20" className="h-[19px] w-[23px]"><path d="M0 6.500L12 0l12 6.500V20H0z" fill="#fff" /><path d="M3 7h18.500l-8 4 3 4.500z" fill="#20343f" /></svg></Slot>
        <Slot on>
          <svg viewBox="0 0 24 24" className="size-6"><circle cx="11" cy="10.500" r="10.300" fill="#2fa0da" /><path d="M4 10.500l13-5.300-2.300 11-3.700-2.500-2 2-.6-3.700z" fill="#fff" /></svg>
          <span className="absolute bottom-[5px] right-[9px] rounded-[3px] bg-[#e94a44] px-[3px] text-[7px] leading-[9px] font-semibold">.99</span>
        </Slot>
        <Slot on>
          <div className="flex size-[20px] items-center justify-center rounded-[4px] bg-[conic-gradient(#f5b51c,#8fd43a_45deg,#38b6c9_90deg,#7c5fe8_135deg,#e23bb0_200deg,#ee3048_260deg,#f0402c_310deg,#f5b51c)]"><div className="flex size-[13px] items-center justify-center rounded-[4px] bg-[#ee4a6c]"><svg viewBox="0 0 12 8" className="h-[8px] w-[12px]" fill="none" stroke="#fff" strokeWidth="1.400"><path d="M9 7H3.500a2.500 2.500 0 1 1 2-4M4 5.500l2.500-3.800A2.800 2.800 0 1 1 9 7" /></svg></div></div>
        </Slot>
        <Slot on><svg viewBox="0 0 21 21" className="size-[21px]"><path d="M.5.500h20v20H.5z" fill="none" stroke="#fff" /><path d="M1 20v-3.500L7.500 6.500l4.500 6 3-3.500 5.500 7V20z" fill="#fff" /></svg></Slot>
        <Slot on><svg viewBox="0 0 22 22" className="size-[22px]"><circle cx="11" cy="11" r="10.500" fill="#fbc933" /><path d="M11 11L1.900 5.700A10.500 10.500 0 0 1 20.100 5.700z" fill="#e2463a" /><path d="M1.900 5.700A10.500 10.500 0 0 0 10 21.500L15 13l-8 0z" fill="#2fa451" /><path d="M1.900 5.700L7 13l4-7h9.200A10.500 10.500 0 0 0 1.900 5.700z" fill="#e2463a" /><circle cx="11" cy="11" r="5" fill="#fff" /><circle cx="11" cy="11" r="3.900" fill="#4285ea" /></svg></Slot>
        <Slot on active><div className="flex size-[22px] items-center justify-center rounded-[4px] bg-[#470137] text-[12px] font-semibold text-[#f78ff0]">Xd</div></Slot>
      </div>
      <div className="ml-auto flex items-center text-[11px]">
        <svg viewBox="0 0 18 18" className="mr-[9px] h-[18px] w-[18px]"><path d="M10 .5a8.700 8.700 0 1 1-9.500 12Q10 13 10 .5z" fill="#fccb2b" /></svg>
        <span className="w-[36px] text-[12px] tracking-[-0.100px]">0°C</span>
        <ChevronUp size={14} strokeWidth={2} />
        <svg viewBox="0 0 12 16" className="ml-[10px] h-4 w-3" fill="none" stroke="#fff" strokeWidth="1"><path d="M1 4.800h7v6.400H1zM8 8l3-2.500v5zM2.500 2.500q3.500-2 7 0M2.500 13.500q3.500 2 7 0" /></svg>
        <svg viewBox="0 0 12 16" className="ml-[9px] h-4 w-3"><rect x="3" y="0" width="6" height="11" rx="1.500" fill="#fff" /><path d="M1 7.500v2q0 3 5 3t5-3v-2M6 12.500V15" fill="none" stroke="#fff" strokeWidth="1.200" /></svg>
        <svg viewBox="0 0 15 11" className="ml-[10px] h-[11px] w-[15px]"><path d="M6 2.500h7.500v7H4.500V7" fill="none" stroke="#fff" /><path d="M6.500 4h5.500v4H6.500zM14 4.500h1v3h-1z" fill="#fff" /><path d="M.5 2.500h4v1.700q-2 2-4 0zM1.300 0.500v2M3.700 .5v2M2.500 5v3.500h2" fill="#fff" stroke="#fff" strokeWidth=".8" /></svg>
        <svg viewBox="0 0 13 13" className="ml-[10px] size-[13px]" fill="none" stroke="#e6e9ee" strokeWidth="1.200"><path d="M1 12.500A12 12 0 0 1 12.500 1M4 12.500A9 9 0 0 1 12.500 4.300M7 12.500A6 6 0 0 1 12.500 7.500" opacity=".8" /><circle cx="11" cy="11.500" r="1.200" fill="#fff" /></svg>
        <svg viewBox="0 0 15 12" className="ml-[7px] h-3 w-[15px]" fill="none" stroke="#fff" strokeWidth="1.100"><path d="M.7 4v4h2.500L6 11V1L3.200 4zM8 4q1.200 2 0 4" /><path d="M10 2.500q2 3.500 0 7M12.300 1q3 5 0 10" opacity=".45" /></svg>
        <span className="ml-[10px] w-[28px] text-[11.400px] tracking-[-0.400px]">ENG</span>
        <div className="ml-[2px] flex w-[58px] flex-col items-center text-[11px] leading-[17px] tracking-[-0.450px]"><span>0:48</span><span>21.11.2021</span></div>
        <div className="relative ml-[13px] mr-[14px] h-[22px] w-[22px]">
          <svg viewBox="0 0 22 22" className="size-[22px]"><path d="M0 2h14.500v11H6v3.500L3.500 13H0z" fill="#fff" /><path d="M3 5h9M3 7.500h9M3 10h6" stroke="#1b2745" /><circle cx="14.500" cy="15" r="6.700" fill="#33383f" stroke="#8a8f97" /></svg>
          <span className="absolute left-[11.500px] top-[8px] text-[10px] leading-[14px]">1</span>
        </div>
        <div className="mr-[2px] h-[37px] w-px bg-[#5b647c]" />
      </div>
    </div>
  );
}

export default function App() {
  return (
    <div className="relative flex h-[719px] w-[1280px] flex-col overflow-hidden whitespace-nowrap bg-[#f4f4f4] font-['Open_Sans','Noto_Sans',sans-serif]">
      <TopBars />
      <div className="flex h-[613px] min-h-0 shrink-0">
        <Rail />
        <AssetsPanel />
        <div className="relative w-[736px] shrink-0 overflow-hidden bg-[#e4e4e4]">
          {boards.map((b, i) => <Artboard key={i} {...b} />)}
          <Wires />
        </div>
        <Inspector />
      </div>
      <Taskbar />
      <div className="absolute left-[944px] top-[591px] text-[#c0c0c0]">
        <div className="text-[17.800px] leading-[23px] tracking-[-0.080px]">Активация Windows</div>
        <div className="text-[13px] leading-[19px] tracking-[0.150px]">Чтобы активировать Windows, перейдите в<br />раздел "Параметры".</div>
      </div>
    </div>
  );
}
